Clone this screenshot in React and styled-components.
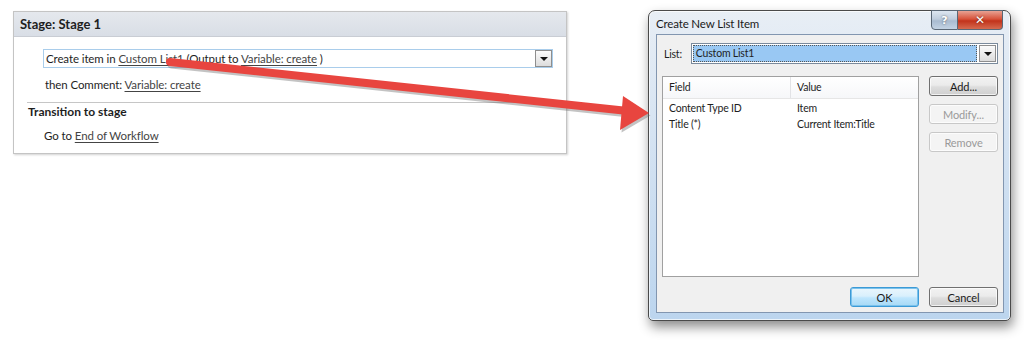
import React from 'react';
import styled, { createGlobalStyle } from 'styled-components';

const GlobalStyle = createGlobalStyle`
  html, body {
    margin: 0;
    background: #ffffff;
  }
  body {
    font-family: Lato, "Open Sans", sans-serif;
    color: #1e1e1e;
  }
`

const Page = styled.div`
  position: relative;
  width: 1024px;
  height: 354px;
  display: flex;
  align-items: flex-start;
  gap: 81px;
  padding: 10px 0 0 13px;
  box-sizing: border-box;
  overflow: hidden;
`

/* ---------- workflow stage panel ---------- */

const StagePanel = styled.section`
  width: 552px;
  margin-top: 1px;
  border: 1px solid #c4c4c4;
  box-shadow: 1px 1px 2px rgba(0, 0, 0, 0.18);
  padding-bottom: 11px;
  font-size: 11.5px;
  letter-spacing: -0.1px;
`

const StageHeader = styled.div`
  height: 24px;
  line-height: 24px;
  padding-left: 6px;
  font-weight: 700;
  font-size: 13px;
  letter-spacing: 0;
  background: linear-gradient(#e5e8ed, #d9dee6);
  border-bottom: 1px solid #c9cdd4;
`

const ActionBox = styled.div`
  display: flex;
  align-items: center;
  height: 17px;
  margin: 12px 13px 0 29px;
  padding-left: 2px;
  border: 1px solid #a9cdeb;
`

const ActionText = styled.span`
  flex: 1;
  white-space: nowrap;
`

const DropButton = styled.span`
  width: 15px;
  height: 15px;
  border: 1px solid #8e8e8e;
  background: linear-gradient(#fbfbfb, #dcdcdc);
  display: flex;
  align-items: center;
  justify-content: center;
  &::after {
    content: '';
    border-left: 4px solid transparent;
    border-right: 4px solid transparent;
    border-top: 4px solid #111;
  }
`

const Line = styled.div`
  padding-left: ${p => p.$indent}px;
  margin-top: ${p => p.$top}px;
  white-space: nowrap;
`

const Link = styled.span`
  color: #444;
  text-decoration: underline;
  text-underline-offset: 2px;
`

const Separator = styled.div`
  margin: 11px 0 0 13px;
  border-top: 1px solid #c6c6c6;
`

const SectionTitle = styled.div`
  padding-left: 14px;
  margin-top: 1px;
  font-weight: 700;
  font-size: 12px;
  letter-spacing: 0;
`

/* ---------- dialog ---------- */

const Dialog = styled.div`
  width: 363px;
  height: 311px;
  box-sizing: border-box;
  border: 1px solid #4a4a4a;
  border-radius: 7px 7px 5px 5px;
  background: linear-gradient(180deg, #e8eef5 0%, #d5e3f2 40%, #bcd5ee 100%);
  box-shadow: 2px 6px 12px rgba(0, 0, 0, 0.45), inset 0 0 0 1px rgba(255, 255, 255, 0.7);
  display: flex;
  flex-direction: column;
  padding: 0 6px 7px 7px;
`

const TitleBar = styled.div`
  height: 26px;
  display: flex;
  align-items: flex-start;
  justify-content: space-between;
`

const TitleText = styled.span`
  margin-top: 6px;
  font-size: 11.5px;
  letter-spacing: -0.15px;
  color: #1a1a1a;
`

const CaptionButtons = styled.div`
  display: flex;
  margin-top: -1px;
  margin-right: 1px;
`

const CaptionButton = styled.span`
  height: 18px;
  width: ${p => (p.$close ? 44 : 25)}px;
  border: 1px solid #5a6775;
  border-left-width: ${p => (p.$close ? 0 : 1)}px;
  border-radius: ${p => (p.$close ? '0 0 4px 0' : '0 0 0 4px')};
  background: ${p =>
    p.$close
      ? 'linear-gradient(#e8a293 0%, #d7523a 45%, #c2331b 55%, #d66a4f 100%)'
      : 'linear-gradient(#dde6f0 0%, #bfcddd 45%, #a9bbd0 55%, #c3d3e4 100%)'};
  color: #fff;
  font-family: "DejaVu Sans", sans-serif;
  font-weight: 700;
  font-size: ${p => (p.$close ? 12 : 11)}px;
  display: flex;
  align-items: center;
  justify-content: center;
  text-shadow: 0 0 2px rgba(0, 0, 0, 0.6);
`

const Client = styled.div`
  flex: 1;
  background: #f0f0f0;
  border: 1px solid #8296b0;
  display: grid;
  grid-template-columns: 257px 1fr;
  grid-template-rows: auto 1fr auto;
  column-gap: 10px;
  padding: 8px 5px 5px 5px;
  font-size: 10.5px;
  letter-spacing: -0.2px;
`

const ListRow = styled.div`
  grid-column: 1 / 3;
  display: flex;
  align-items: center;
  gap: 9px;
  padding-left: 2px;
`

const Select = styled.div`
  flex: 1;
  height: 17px;
  display: flex;
  align-items: center;
  border: 1px solid #7a8a9c;
  background: #fff;
  padding: 1px;
`

const Selected = styled.span`
  flex: 1;
  height: 100%;
  background: #99c8f3;
  outline: 1px dotted #555;
  outline-offset: -1px;
  padding-left: 3px;
  line-height: 17px;
  margin-right: 2px;
`

const Table = styled.div`
  margin-top: 12px;
  height: 199px;
  background: #fff;
  border: 1px solid #a0a0a0;
  display: flex;
  flex-direction: column;
`

const TableHead = styled.div`
  display: grid;
  grid-template-columns: 128px 1fr;
  height: 21px;
  border-bottom: 1px solid #e6e6e6;
  background: linear-gradient(#ffffff, #f6f7f9);
`

const HeadCell = styled.div`
  padding-left: 6px;
  line-height: 21px;
  border-right: ${p => (p.$divider ? '1px solid #e2e3e6' : 'none')};
`

const TableRow = styled.div`
  display: grid;
  grid-template-columns: 128px 1fr;
  line-height: 16px;
  margin-top: ${p => (p.$first ? 1 : 0)}px;
`

const Cell = styled.div`
  padding-left: 6px;
`

const SideButtons = styled.div`
  margin-top: 12px;
  display: flex;
  flex-direction: column;
  gap: 8px;
`

const Button = styled.button`
  width: 69px;
  height: 20px;
  padding: 0;
  font-family: inherit;
  font-size: 11px;
  letter-spacing: -0.1px;
  border-radius: 3px;
  border: 1px solid ${p => (p.$disabled ? '#c8c8c8' : p.$default ? '#3c9ad6' : '#707070')};
  color: ${p => (p.$disabled ? '#9a9a9a' : '#1a1a1a')};
  background: ${p =>
    p.$disabled
      ? '#f4f4f4'
      : p.$default
      ? 'linear-gradient(#eaf6fd 0%, #d9f0fc 45%, #bee6fd 55%, #a7d9f5 100%)'
      : 'linear-gradient(#f2f2f2 0%, #ebebeb 45%, #dddddd 55%, #cfcfcf 100%)'};
  box-shadow: ${p => (p.$default ? 'inset 0 0 0 1px #7ac2ec' : 'inset 0 0 0 1px rgba(255,255,255,0.7)')};
`

const Footer = styled.div`
  grid-column: 1 / 3;
  display: flex;
  justify-content: flex-end;
  gap: 10px;
  margin-top: 10px;
`

/* ---------- arrow overlay ---------- */

const Overlay = styled.svg`
  position: absolute;
  left: 0;
  top: 0;
  pointer-events: none;
`

function Arrow() {
  return (
    <Overlay width="1024" height="354" viewBox="0 0 1024 354">
      <g transform="translate(1.5 2.5)" fill="#6b6b6b" stroke="#6b6b6b" opacity="0.4">
        <line x1="170" y1="62" x2="628" y2="111" strokeWidth="8" strokeLinecap="round" />
        <polygon points="623,96 649,113 620,130" stroke="none" />
      </g>
      <g fill="#e8453f" stroke="#e8453f">
        <line x1="170" y1="62" x2="628" y2="111" strokeWidth="8" strokeLinecap="round" />
        <polygon points="623,96 649,113 620,130" stroke="none" />
      </g>
    </Overlay>
  )
}

export default function App() {
  return (
    <>
      <GlobalStyle />
      <Page>
        <StagePanel>
          <StageHeader>Stage: Stage 1</StageHeader>
          <ActionBox>
            <ActionText>
              Create item in <Link>Custom List1</Link> (Output to <Link>Variable: create</Link> )
            </ActionText>
            <DropButton />
          </ActionBox>
          <Line $indent={31} $top={10}>
            then Comment: <Link>Variable: create</Link>
          </Line>
          <Separator />
          <SectionTitle>Transition to stage</SectionTitle>
          <Line $indent={30} $top={10}>
            Go to <Link>End of Workflow</Link>
          </Line>
        </StagePanel>

        <Dialog>
          <TitleBar>
            <TitleText>Create New List Item</TitleText>
            <CaptionButtons>
              <CaptionButton>?</CaptionButton>
              <CaptionButton $close>✕</CaptionButton>
            </CaptionButtons>
          </TitleBar>
          <Client>
            <ListRow>
              <span>List:</span>
              <Select>
                <Selected>Custom List1</Selected>
                <DropButton />
              </Select>
            </ListRow>
            <Table>
              <TableHead>
                <HeadCell $divider>Field</HeadCell>
                <HeadCell>Value</HeadCell>
              </TableHead>
              <TableRow $first>
                <Cell>Content Type ID</Cell>
                <Cell>Item</Cell>
              </TableRow>
              <TableRow>
                <Cell>Title (*)</Cell>
                <Cell>Current Item:Title</Cell>
              </TableRow>
            </Table>
            <SideButtons>
              <Button>Add...</Button>
              <Button $disabled>Modify...</Button>
              <Button $disabled>Remove</Button>
            </SideButtons>
            <Footer>
              <Button $default>OK</Button>
              <Button>Cancel</Button>
            </Footer>
          </Client>
        </Dialog>
        <Arrow />
      </Page>
    </>
  )
}
